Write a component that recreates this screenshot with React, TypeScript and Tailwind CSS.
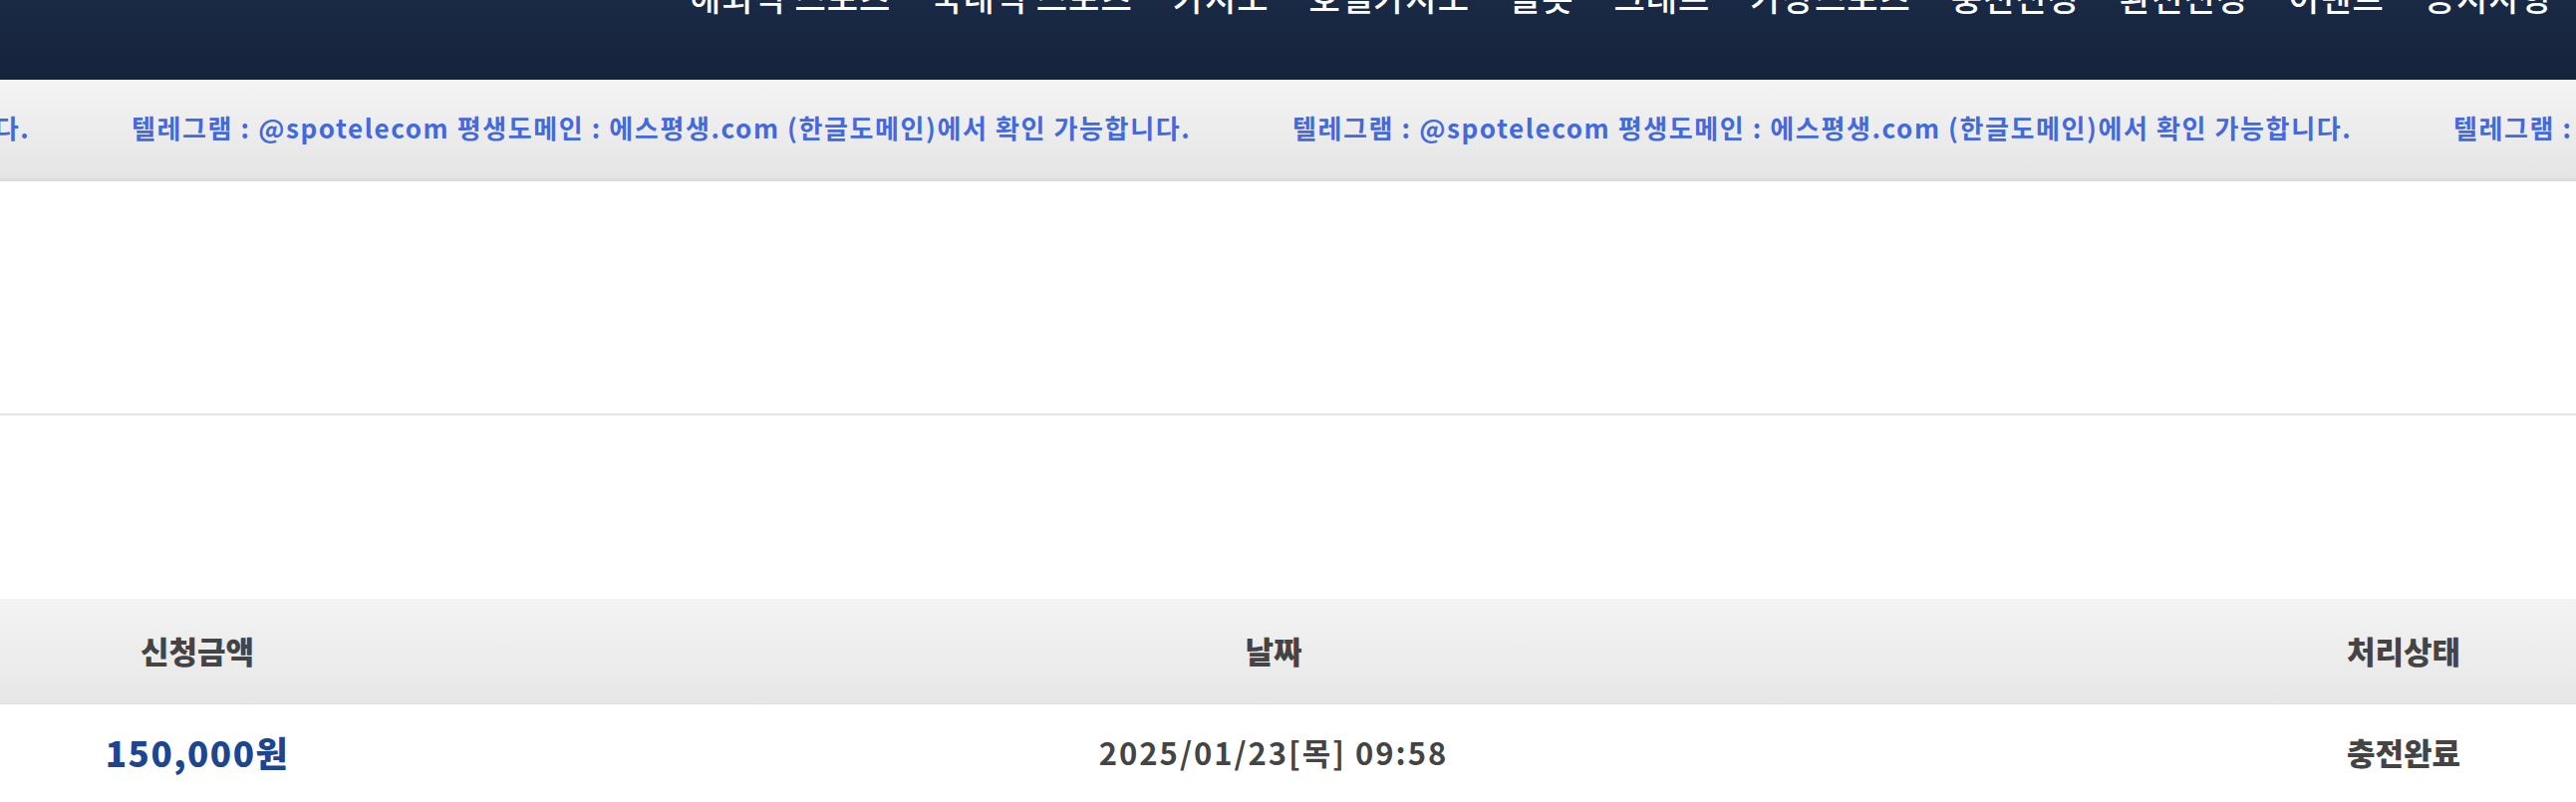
import React from 'react';

const FONT = "font-['Noto_Sans_CJK_KR','Noto_Sans',sans-serif]";

const NAV_ITEMS = ['해외식 스포츠', '국내식 스포츠', '카지노', '호텔카지노', '슬롯', '그래프', '가상스포츠', '충전신청', '환전신청', '이벤트', '공지사항'];

const NOTICE = '텔레그램 : @spotelecom 평생도메인 : 에스평생.com (한글도메인)에서 확인 가능합니다.';

const App: React.FC = () => {
  return (
    <div className={`w-full min-h-screen bg-white overflow-hidden ${FONT}`}>
      {/* Top nav - only the bottom of the menu is visible */}
      <div className="h-[80px] bg-gradient-to-b from-[#1a2944] to-[#16233c] overflow-hidden">
        <div className="flex gap-[40px] pl-[692px] -mt-[20px] whitespace-nowrap">
          {NAV_ITEMS.map((item) => (
            <span key={item} className="text-[34px] leading-[34px] font-medium text-white shrink-0 tracking-[1px]">
              {item}
            </span>
          ))}
        </div>
      </div>

      {/* Marquee notice */}
      <div className="h-[102px] bg-gradient-to-b from-[#f4f4f4] to-[#e5e5e5] border-b-[3px] border-[#dcdcdc] flex items-center overflow-hidden">
        <div className="flex -ml-[1033px] -mt-[4px] whitespace-nowrap">
          {[0, 1, 2, 3].map((i) => (
            <span key={i} className="w-[1165px] shrink-0 text-[26px] font-bold text-[#4369dc] tracking-[1.6px]">
              {NOTICE}
            </span>
          ))}
        </div>
      </div>

      {/* Empty content area */}
      <div className="h-[235px] border-b-2 border-[#e3e3e3]" />
      <div className="h-[184px]" />

      {/* Table */}
      <div className="w-[2664px]">
        <div className="grid grid-cols-[396px_1764px_504px] h-[106px] items-center bg-gradient-to-b from-[#f3f3f3] to-[#e7e7e7] border-b border-[#dedede] text-[31px] font-extrabold text-[#444]">
          <div className="text-center">신청금액</div>
          <div className="text-center">날짜</div>
          <div className="text-center">처리상태</div>
        </div>
        <div className="grid grid-cols-[396px_1764px_504px] h-[100px] items-center -mt-[2px]">
          <div className="text-center text-[35px] font-black text-[#1d4690] tracking-[1.5px]">150,000원</div>
          <div className="text-center text-[31px] font-bold text-[#444] tracking-[2px]">2025/01/23[목] 09:58</div>
          <div className="text-center text-[31px] font-extrabold text-[#444]">충전완료</div>
        </div>
      </div>
    </div>
  );
};

export default App;
